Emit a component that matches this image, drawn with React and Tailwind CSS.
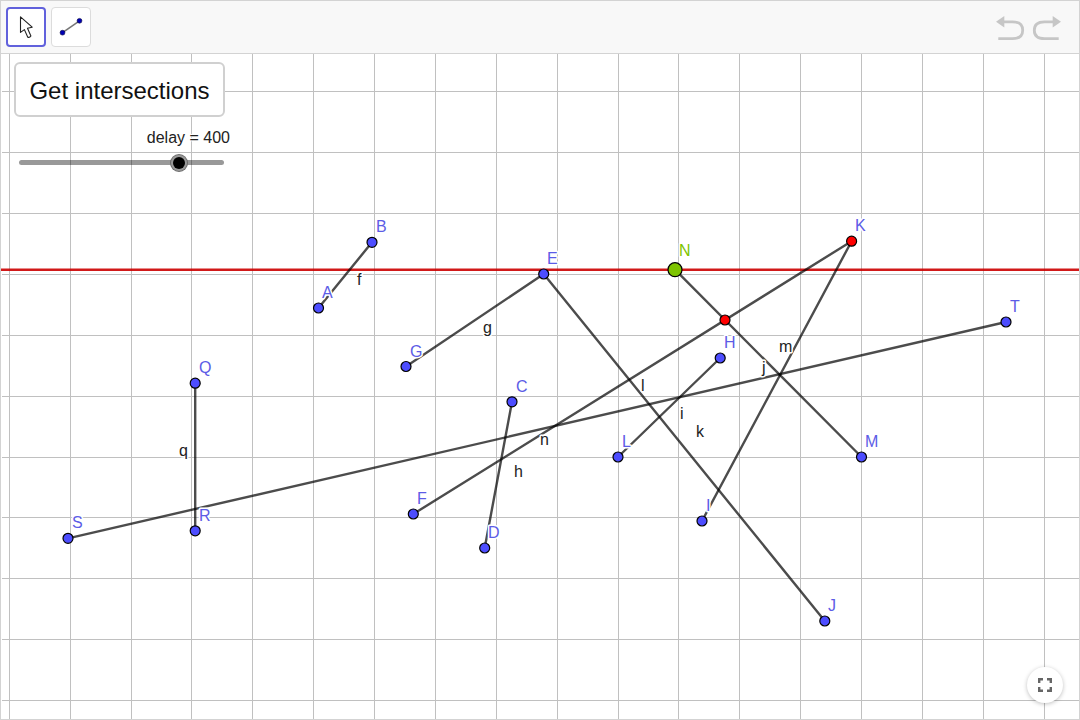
import { useState } from "react";

const GRID_X = [9, 70, 131, 191, 252, 313, 374, 435, 496, 557, 618, 678, 739, 800, 861, 922, 983, 1044];
const GRID_Y = [91, 152, 213, 274, 335, 396, 457, 517, 578, 639, 700];

const BLUE = "#4d4dff";
const RED = "#ff0000";

const POINTS = {
  A: [318.5, 308],
  B: [372, 242.3],
  C: [512, 401.8],
  D: [484.7, 548],
  E: [543.7, 274],
  F: [413.3, 514],
  G: [406, 366.5],
  H: [720.2, 358],
  I: [702, 521],
  J: [824.8, 621],
  K: [851.6, 241.2, RED],
  L: [618, 457],
  M: [861.5, 457],
  Q: [195.2, 383.2],
  R: [195.2, 530.8],
  S: [68, 538.3],
  T: [1006, 322],
};

const SEGMENTS = [
  { name: "f", from: [318.5, 308], to: [372, 242.3], label: [357, 285] },
  { name: "g", from: [406, 366.5], to: [543.7, 274], label: [483, 333] },
  { name: "h", from: [512, 401.8], to: [484.7, 548], label: [514, 477] },
  { name: "i", from: [720.2, 358], to: [618, 457], label: [680, 419] },
  { name: "j", from: [675, 269.7], to: [861.5, 457], label: [762, 373] },
  { name: "k", from: [543.7, 274], to: [824.8, 621], label: [696, 437] },
  { name: "l", from: [413.3, 514], to: [851.6, 241.2], label: [641, 391] },
  { name: "m", from: [702, 521], to: [851.6, 241.2], label: [779, 352] },
  { name: "n", from: [68, 538.3], to: [1006, 322], label: [540, 445] },
  { name: "q", from: [195.2, 383.2], to: [195.2, 530.8], label: [179, 456] },
];

function Label({ x, y, fill, children }) {
  return (
    <text x={x} y={y} fill={fill} fontSize="16" stroke="#fff" strokeWidth="3" strokeLinejoin="round" paintOrder="stroke">
      {children}
    </text>
  );
}

function Drawing() {
  return (
    <svg className="absolute inset-0 h-full w-full" role="img" aria-label="Sweep line over segments">
      <g transform="translate(-1 -54)">
        <g stroke="#c0c0c0" strokeWidth="1">
          {GRID_X.map((x) => (
            <line key={x} x1={x + 0.5} x2={x + 0.5} y1="54" y2="760" />
          ))}
          {GRID_Y.map((y) => (
            <line key={y} x1="2" x2="101%" y1={y + 0.5} y2={y + 0.5} />
          ))}
        </g>
        <line x1="1" x2="101%" y1="269.7" y2="269.7" stroke="#cc0000" strokeOpacity="0.9" strokeWidth="2.6" />
        <g stroke="#000" strokeOpacity="0.7" strokeWidth="2.4" strokeLinecap="round">
          {SEGMENTS.map(({ name, from, to }) => (
            <line key={name} x1={from[0]} y1={from[1]} x2={to[0]} y2={to[1]} />
          ))}
        </g>
        {SEGMENTS.map(({ name, label }) => (
          <Label key={name} x={label[0]} y={label[1]} fill="#222">
            {name}
          </Label>
        ))}
        {Object.entries(POINTS).map(([name, [x, y]]) => (
          <Label key={name} x={Math.floor(x + 4)} y={Math.round(y - 10)} fill="#5c5ce6">
            {name}
          </Label>
        ))}
        <Label x={679} y={256} fill="#7dc400">
          N
        </Label>
        <g stroke="#000" strokeWidth="1.2">
          {Object.entries(POINTS).map(([name, [x, y, color]]) => (
            <circle key={name} cx={x} cy={y} r="5" fill={color || BLUE} />
          ))}
          <circle cx="725" cy="320" r="5" fill={RED} />
          <circle cx="675" cy="269.7" r="7" fill="#7dc400" />
        </g>
      </g>
    </svg>
  );
}

function Toolbar() {
  return (
    <header className="flex h-[53px] shrink-0 items-start justify-between border-b border-[#d3d3d3] bg-[#f8f8f8] pt-[6px] pr-[14px] pl-[5px]">
      <div className="flex gap-[5px]">
        <button aria-label="Move" aria-pressed="true" className="flex size-10 items-center justify-center rounded border-2 border-[#6161dc] bg-white">
          <svg width="36" height="36" viewBox="8 9 36 36" fill="none" className="shrink-0">
            <path d="M20.5 16.8V32.4L24.4 29.6L27.8 37.2Q29.6 38 30.9 36L27.5 28.3L32.2 27.2Z" fill="#fff" stroke="#222" strokeWidth="1.1" strokeLinejoin="round" />
          </svg>
        </button>
        <button aria-label="Segment" className="flex size-10 items-center justify-center rounded border border-[#dcdcdc] bg-white">
          <svg width="38" height="38" viewBox="52 8 38 38" className="shrink-0">
            <path d="M62.5 32.7L79.5 20.8" stroke="#777" strokeWidth="1.6" />
            <circle cx="62.5" cy="32.7" r="2.4" fill="#0000b4" stroke="#000040" strokeWidth="0.6" />
            <circle cx="79.5" cy="20.8" r="2.4" fill="#0000b4" stroke="#000040" strokeWidth="0.6" />
          </svg>
        </button>
      </div>
      <div className="flex">
        <button aria-label="Undo" className="flex h-10 w-9 items-center justify-center">
          <svg width="36" height="36" viewBox="993 9 36 36" fill="none">
            <path d="M1003 21.8H1012.5C1019.5 21.8 1022.7 25.2 1022.7 30.2C1022.7 35.2 1019.5 38.6 1012.5 38.6H998.3" stroke="#c6c6c6" strokeWidth="2.8" />
            <path d="M996 21.8L1004.3 16V27.6Z" fill="#c6c6c6" />
          </svg>
        </button>
        <button aria-label="Redo" className="flex h-10 w-9 items-center justify-center">
          <svg width="36" height="36" viewBox="1029 9 36 36" fill="none">
            <path d="M1054 21.8H1044.5C1037.5 21.8 1034.3 25.2 1034.3 30.2C1034.3 35.2 1037.5 38.6 1044.5 38.6H1058.7" stroke="#c6c6c6" strokeWidth="2.8" />
            <path d="M1061 21.8L1052.7 16V27.6Z" fill="#c6c6c6" />
          </svg>
        </button>
      </div>
    </header>
  );
}

export default function App() {
  const [delay, setDelay] = useState(400);
  return (
    <div className="flex min-h-screen flex-col border border-[#d3d3d3] bg-white font-['Liberation_Sans',Arial,sans-serif]">
      <Toolbar />
      <main className="relative flex-1 overflow-hidden">
        <Drawing />
        <div className="relative flex w-[229px] flex-col pt-2 pl-[13px]">
          <button className="h-[55px] w-[211px] rounded-md border-2 border-[#d0d0d0] bg-white pt-[2px] text-2xl text-[#111]">
            Get intersections
          </button>
          <label htmlFor="delay" className="mt-[11px] text-right text-base leading-5 text-[#222] [text-shadow:0_0_2px_#fff,0_0_2px_#fff,1px_1px_0_#fff,-1px_-1px_0_#fff]">
            delay = {delay}
          </label>
          <input
            id="delay"
            type="range"
            min="0"
            max="500"
            value={delay}
            onChange={(e) => setDelay(Number(e.target.value))}
            className="mt-3 ml-[5px] h-[5px] w-[205px] appearance-none rounded-full bg-black/40 [&::-webkit-slider-thumb]:size-3 [&::-webkit-slider-thumb]:appearance-none [&::-webkit-slider-thumb]:rounded-full [&::-webkit-slider-thumb]:bg-black [&::-webkit-slider-thumb]:shadow-[0_0_0_2px_#999,0_0_0_3px_#6b6b6b]"
          />
        </div>
        <button aria-label="Fullscreen" className="absolute right-4 bottom-4 flex size-9 items-center justify-center rounded-full bg-white shadow-[0_1px_4px_rgba(0,0,0,0.25)]">
          <svg width="24" height="24" viewBox="0 0 24 24" fill="#666">
            <path d="M7.4 14H5v5h5v-2.4H7.4zM5 10h2.4V7.4H10V5H5zM16.6 16.6H14V19h5v-5h-2.4zM14 5v2.4h2.6V10H19V5z" />
          </svg>
        </button>
      </main>
    </div>
  );
}
